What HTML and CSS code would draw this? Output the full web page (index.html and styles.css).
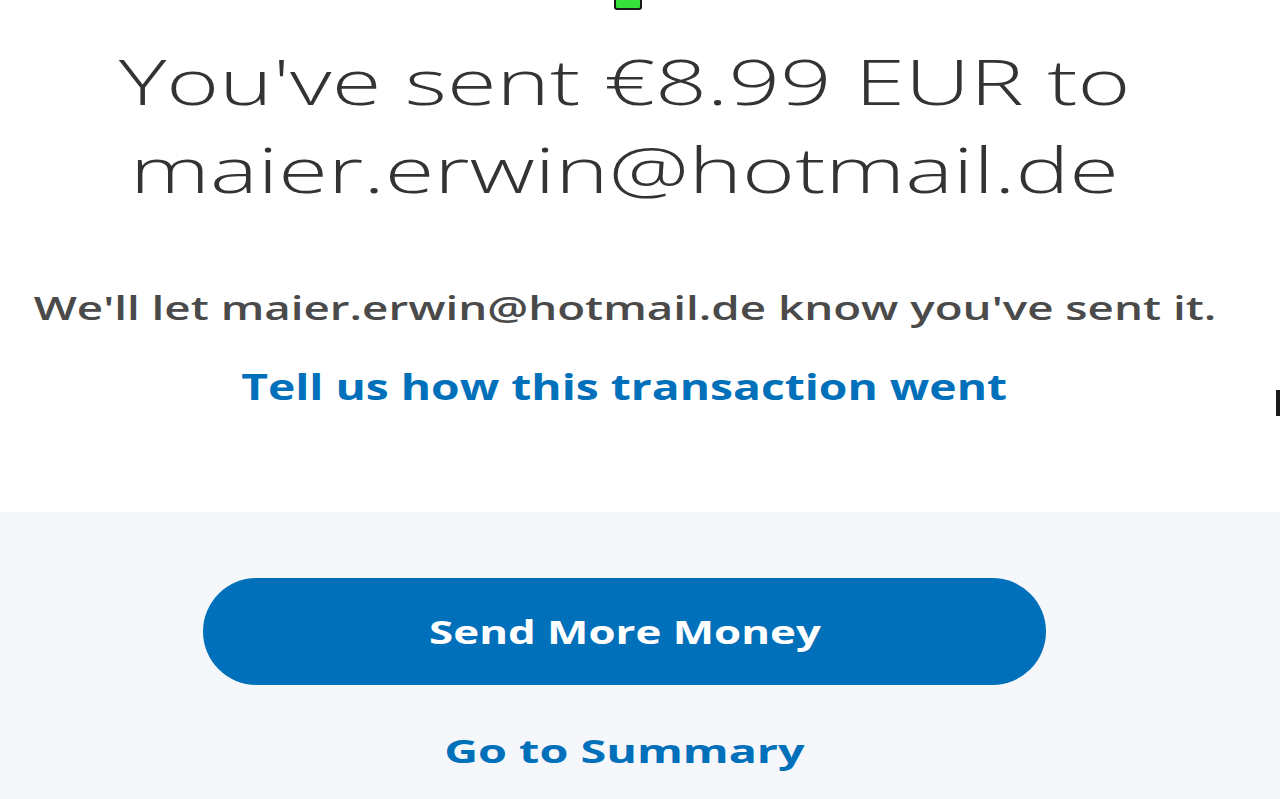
FILE: index.html
```html
<!DOCTYPE html>
<html>
<head>
    <title>Payment sent</title>
    <link rel="stylesheet" href="styles.css">
</head>
<body>
    <div class="marker marker--top"></div>
    <div class="marker marker--side"></div>
    <div class="confirm">
        <h1 class="confirm__title"><span class="wide">You've sent €8.99 EUR to</span><br><span class="wide">maier.erwin@hotmail.de</span></h1>
        <p class="confirm__note"><span class="wide">We'll let maier.erwin@hotmail.de know you've sent it.</span></p>
        <a href="#" class="confirm__feedback"><span class="wide">Tell us how this transaction went</span></a>
    </div><!-- end confirm -->
    <div class="actions">
        <a href="#" class="actions__primary"><span class="wide">Send More Money</span></a>
        <a href="#" class="actions__secondary"><span class="wide">Go to Summary</span></a>
    </div><!-- end actions -->
</body>
</html>
```

FILE: styles.css
```css
html, body {
    margin: 0;
    height: 100%;
    font-family: 'Open Sans', sans-serif;
    background: #fff;
    overflow: hidden;
}

body {
    display: flex;
    flex-direction: column;
}

/* the screenshot is stretched sideways, so the text is too */
.wide {
    display: inline-block;
    white-space: nowrap;
    transform: scaleX(var(--sx, 1.38));
}

.marker {
    position: absolute;
    background: #1a1a1a;
}

.marker--top {
    top: -4px;
    left: 614px;
    width: 24px;
    height: 10px;
    background: #35e03a;
    border: 2px solid #1a1a1a;
    border-radius: 3px;
}

.marker--side {
    top: 390px;
    right: 0;
    width: 4px;
    height: 26px;
}

.confirm {
    display: flex;
    flex-direction: column;
    align-items: center;
    height: 512px;
    box-sizing: border-box;
    padding: 37px 31px 0 0;
    text-align: center;
}

.confirm__title {
    margin: 0;
    font-size: 63px;
    font-weight: 350;
    line-height: 88px;
    color: #333;
    --sx: 1.435;
}

.confirm__note {
    margin: 72px 0 0;
    font-size: 33px;
    font-weight: 600;
    color: #4a4a4a;
    --sx: 1.385;
}

.confirm__feedback {
    margin-top: 33px;
    font-size: 35px;
    font-weight: 700;
    color: #0070ba;
    text-decoration: none;
    --sx: 1.32;
}

.actions {
    flex: 1;
    display: flex;
    flex-direction: column;
    align-items: center;
    padding: 66px 31px 0 0;
    background: #f5f7fa;
}

.actions__primary {
    display: flex;
    align-items: center;
    justify-content: center;
    width: 843px;
    height: 107px;
    border-radius: 54px;
    background: #0070ba;
    color: #fff;
    font-size: 32px;
    font-weight: 700;
    text-decoration: none;
    --sx: 1.37;
}

.actions__secondary {
    margin-top: 44px;
    font-size: 32px;
    font-weight: 700;
    color: #0070ba;
    text-decoration: none;
    --sx: 1.46;
}
```
